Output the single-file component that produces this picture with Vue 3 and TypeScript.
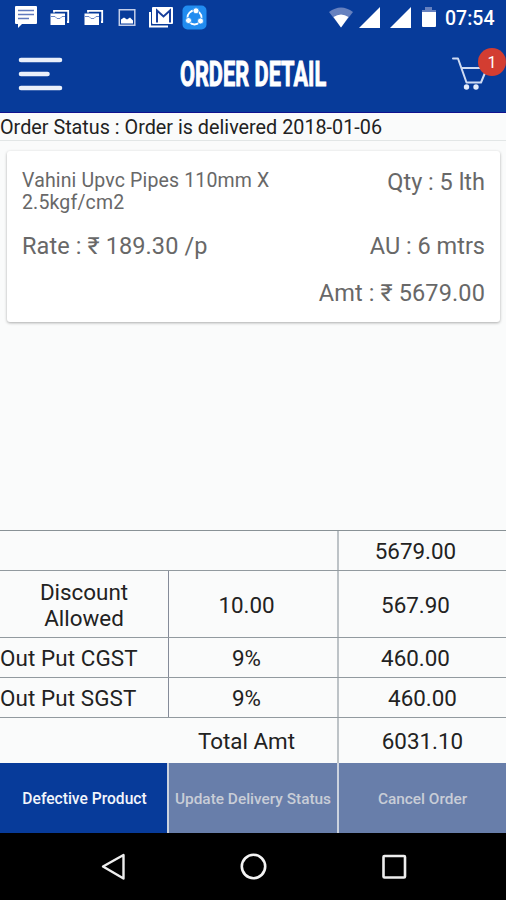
<script setup lang="ts">
interface SummaryRow {
  kind: string
  label: string
  rate: string
  amount: string
}

const rows: SummaryRow[] = [
  { kind: 'subtotal', label: '', rate: '', amount: '5679.00' },
  { kind: 'discount', label: 'Discount Allowed', rate: '10.00', amount: '567.90' },
  { kind: 'cgst', label: 'Out Put CGST', rate: '9%', amount: '460.00' },
  { kind: 'sgst', label: 'Out Put SGST', rate: '9%', amount: '460.00' },
  { kind: 'total', label: '', rate: 'Total Amt', amount: '6031.10' },
]
</script>

<template>
  <main class="screen">
    <header class="header">
      <div class="status-bar">
        <svg class="notifications" width="220" height="36" viewBox="0 0 220 36">
          <path fill="#fff" d="M16 6h20q1 0 1 1v16q0 1-1 1H22l-4 4v-4h-2q-1 0-1-1V7q0-1 1-1z" />
          <path stroke="#6079bd" stroke-width="1.4" d="M18 10.500h16M18 14.500h16M18 18.500h11" />
          <g v-for="x in [0, 34]" :key="x" :transform="`translate(${x} 0)`">
            <path fill="none" stroke="#fff" stroke-width="1.800" d="M54 12.500v-1.600h14.200V22H67" />
            <path fill="#fff" d="M50.500 13.500h14.500v11.500h-14.500z" />
            <path fill="none" stroke="#6b88c8" stroke-width="1" d="M51 16.500h4l2 2h3l2-2h3" />
          </g>
          <path fill="none" stroke="#c3cee9" stroke-width="1.500" d="M119.300 9.800h15.500v15.500h-15.500z" />
          <path fill="#fff" d="M121 23.500v-4l3-2 3 2 3-2 3 3v3z" />
          <path fill="none" stroke="#fff" stroke-width="2" d="M150 12v14.500h18" />
          <path fill="#fff" d="M153 7h19q1 0 1 1v15q0 1-1 1h-19q-1 0-1-1V8q0-1 1-1z" />
          <path fill="none" stroke="#173f9c" stroke-width="2" d="M157 22.500V10.500l6.500 6 6.500-6v12" />
          <rect x="182.500" y="5.500" width="24" height="24" rx="5" fill="#218cf0" />
          <circle cx="194.500" cy="17.500" r="7" fill="none" stroke="#fff" stroke-width="1.800" />
          <g fill="#fff" stroke="#218cf0" stroke-width=".8">
            <circle cx="196" cy="10.800" r="3" />
            <circle cx="188.500" cy="20.500" r="3" />
            <circle cx="200.500" cy="21" r="3" />
          </g>
        </svg>
        <svg class="signals" width="108" height="36" viewBox="328 0 108 36">
          <path fill="#6681bf" d="M329 12q12-9 24 0L341 27.500z" />
          <path fill="#fff" d="M333.500 17q7.500-5 15 0L341 27.500zM380 7v21h-21zM411 7v21h-21z" />
          <path fill="#6681bf" d="M422 10h3V7h7v3h4v4h-14z" />
          <path fill="#fff" d="M422 12h14v14q0 1-1 1h-12q-1 0-1-1z" />
        </svg>
        <span class="clock">07:54</span>
      </div>
      <div class="toolbar">
        <button class="icon-button" aria-label="Menu">
          <svg width="46" height="36" viewBox="0 0 46 36">
            <path stroke="#e9effa" stroke-width="4.600" stroke-linecap="round" d="M4 4h39M4 18h26.500M4 32h39" />
          </svg>
        </button>
        <h1 class="title">ORDER DETAIL</h1>
        <button class="icon-button cart" aria-label="Cart">
          <svg width="36" height="36" viewBox="0 0 36 36">
            <path fill="none" stroke="#cfdbf3" stroke-width="2" stroke-linecap="round" stroke-linejoin="round" d="M1 2.500h5l8.500 24h14.500L35 12H9.500" />
            <circle cx="14.500" cy="31" r="2.700" fill="#e4ecfb" />
            <circle cx="24" cy="31" r="2.700" fill="#e4ecfb" />
          </svg>
          <span class="badge">1</span>
        </button>
      </div>
    </header>

    <p class="order-status">Order Status : Order is delivered 2018-01-06</p>

    <section class="items">
      <article class="card">
        <div class="card-row first">
          <h2 class="name">Vahini Upvc Pipes 110mm X 2.5kgf/cm2</h2>
          <span class="qty">Qty : 5 lth</span>
        </div>
        <div class="card-row">
          <span class="rate">Rate : ₹ 189.30 /p</span>
          <span class="unit">AU : 6 mtrs</span>
        </div>
        <div class="card-row last">
          <span class="amt">Amt : ₹ 5679.00</span>
        </div>
      </article>
    </section>

    <section class="summary">
      <div v-for="row in rows" :key="row.kind" class="summary-row" :class="row.kind">
        <span class="cell label"><span>{{ row.label }}</span></span>
        <span class="cell middle"><span>{{ row.rate }}</span></span>
        <span class="cell value"><span>{{ row.amount }}</span></span>
      </div>
    </section>

    <div class="actions">
      <button class="action primary">Defective Product</button>
      <button class="action update">Update Delivery Status</button>
      <button class="action">Cancel Order</button>
    </div>

    <nav class="nav-bar">
      <svg width="28" height="30" viewBox="0 0 28 30">
        <path fill="none" stroke="#eee" stroke-width="2.400" stroke-linejoin="round" d="M24.500 3v23.500L4 14.500z" />
      </svg>
      <svg width="28" height="30" viewBox="0 0 28 30">
        <circle cx="13.500" cy="14.500" r="11.700" fill="none" stroke="#f4f4f4" stroke-width="2.600" />
      </svg>
      <svg width="28" height="30" viewBox="0 0 28 30">
        <rect x="3.500" y="4" width="21.500" height="21.500" rx="1" fill="none" stroke="#eee" stroke-width="2.600" />
      </svg>
    </nav>
  </main>
</template>

<style>
body {
  margin: 0;
}
</style>

<style scoped>
* {
  box-sizing: border-box;
}

.screen {
  display: flex;
  flex-direction: column;
  width: 506px;
  height: 900px;
  overflow: hidden;
  background: #fafbfb;
  color: #222;
  font-family: Roboto, sans-serif;
}

svg {
  display: block;
}

button {
  margin: 0;
  padding: 0;
  border: 0;
  background: none;
  font-family: inherit;
}

.header {
  height: 113px;
  background: #073b9a;
  border-bottom: 1px solid #11128e;
}

.status-bar {
  display: flex;
  height: 36px;
}

.signals {
  margin-left: 108px;
}

.clock {
  margin-left: 9px;
  color: #fff;
  font-size: 19.5px;
  font-weight: 500;
  line-height: 37px;
}

.toolbar {
  display: grid;
  grid-template-columns: 46px 1fr 46px;
  align-items: center;
  height: 76px;
  padding: 0 8px 0 17px;
}

.title {
  justify-self: center;
  margin: 0;
  color: #fff;
  font-size: 34.5px;
  font-weight: 700;
  line-height: 44px;
  white-space: nowrap;
  transform: translateX(-4px) scaleX(0.63);
  -webkit-text-stroke: 1px #fff;
}

.cart {
  position: relative;
  width: 36px;
}

.badge {
  position: absolute;
  top: -8px;
  left: 26px;
  width: 28px;
  height: 28px;
  border-radius: 50%;
  background: #d33d31;
  color: #fff;
  font-size: 16px;
  line-height: 30px;
  text-align: center;
}

.order-status {
  height: 28px;
  margin: 0;
  border-bottom: 1px solid #e2e6e6;
  font-size: 19.8px;
  line-height: 29px;
  white-space: nowrap;
}

.items {
  flex: 1;
  padding: 10px 6px 0 7px;
}

.card {
  height: 171px;
  padding: 16px 15px 0;
  border-radius: 3px;
  background: #fff;
  box-shadow: 0 1px 3px rgba(0, 0, 0, 0.32);
  color: #686868;
  font-size: 23.5px;
}

.card-row {
  display: flex;
  justify-content: space-between;
  height: 47px;
  line-height: 30px;
}

.card-row.first {
  height: 64px;
}

.card-row.last {
  justify-content: flex-end;
}

.rate {
  letter-spacing: 0.1px;
}

.amt {
  letter-spacing: 0.12px;
}

.name {
  width: 260px;
  margin: 3px 0 0;
  font-size: 19.5px;
  font-weight: 400;
  line-height: 22px;
  letter-spacing: 0.15px;
}

.summary {
  border-top: 1px solid #899296;
  font-size: 22.4px;
}

.summary-row {
  display: grid;
  grid-template-columns: 169px 170px 167px;
  height: 40px;
  border-bottom: 1px solid #929a9f;
}

.summary-row.discount {
  height: 67px;
}

.summary-row.total {
  height: 45px;
  border-bottom: 0;
}

.cell {
  display: flex;
  align-items: center;
  justify-content: center;
  text-align: center;
  line-height: 26px;
  padding-top: 1px;
}

.label {
  border-right: 1px solid #858b99;
}

.cgst .label,
.sgst .label {
  justify-content: flex-start;
  letter-spacing: 0.1px;
}

.middle {
  border-right: 2px solid #bdc3c7;
  padding-right: 13px;
}

.subtotal .label,
.total .label {
  border-right-color: transparent;
}

.discount .label > span {
  width: 100px;
}

.value {
  padding-right: 14px;
}

.total .value,
.sgst .value {
  padding-right: 0;
}

.actions {
  display: grid;
  grid-template-columns: 167px 168px 167px;
  gap: 2px;
  height: 70px;
  background: #ccd3df;
}

.action {
  padding-top: 2px;
  background: #687eaa;
  color: #c8cdd7;
  font-size: 15.4px;
  font-weight: 500;
  white-space: nowrap;
}

.action.primary {
  padding-left: 2px;
  background: #073b9a;
  color: #f2f5fb;
  font-size: 15.6px;
}

.nav-bar {
  display: flex;
  align-items: center;
  justify-content: space-between;
  height: 67px;
  padding: 0 98px 0 99px;
  background: #000;
}
</style>
